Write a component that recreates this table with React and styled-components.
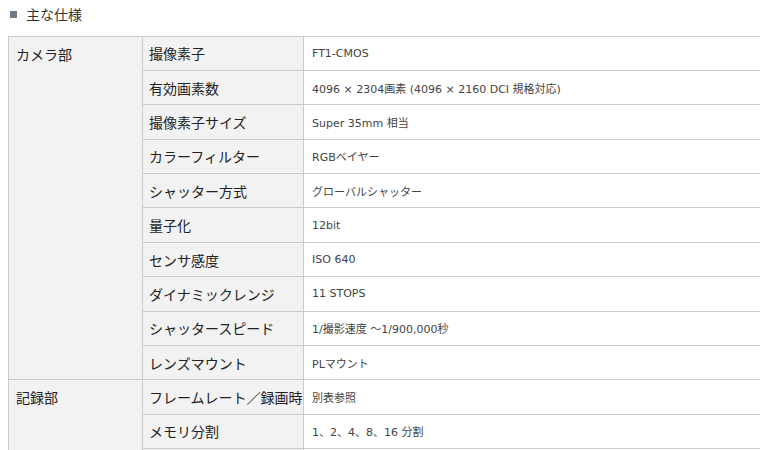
import React from 'react';
import styled, { createGlobalStyle } from 'styled-components';

const GlobalStyle = createGlobalStyle`
  html, body {
    margin: 0;
    padding: 0;
    background: #ffffff;
    overflow: hidden;
  }
  body {
    font-family: 'Noto Sans CJK JP', 'Noto Sans', sans-serif;
    color: #333333;
  }
`;

const Page = styled.div`
  width: 760px;
  height: 450px;
  overflow: hidden;
  padding: 0 0 0 8px;
  box-sizing: border-box;
`;

const Heading = styled.h2`
  display: flex;
  align-items: center;
  gap: 9px;
  margin: 0;
  padding: 0 0 0 2px;
  height: 28px;
  box-sizing: border-box;
  font-size: 14px;
  font-weight: normal;
  color: #333333;
  line-height: 20px;
`;

const Square = styled.span`
  display: block;
  width: 7px;
  height: 7px;
  background: #6f7b86;
`;

const SpecTable = styled.table`
  border-collapse: collapse;
  width: 820px;
  table-layout: fixed;
  margin-top: 7.5px;
`;

const Row = styled.tr`
  height: 34.4px;
`;

const Cell = styled.td`
  border: 1px solid #cccccc;
  padding: 0;
  box-sizing: border-box;
`;

const GroupCell = styled(Cell)`
  background: #f2f2f2;
  vertical-align: top;
  padding: 8px 0 0 7px;
  font-size: 14px;
  color: #222222;
  line-height: 18px;
`;

const LabelCell = styled(Cell)`
  background: #f2f2f2;
  padding-left: 6px;
  font-size: 14px;
  color: #222222;
  white-space: nowrap;
`;

const ValueCell = styled(Cell)`
  background: #ffffff;
  padding-left: 8px;
  font-family: 'DejaVu Sans', 'Noto Sans CJK JP', sans-serif;
  font-size: 11px;
  color: #444444;
  white-space: nowrap;
`;

const groups = [
  {
    name: 'カメラ部',
    rows: [
      ['撮像素子', 'FT1-CMOS'],
      ['有効画素数', '4096 × 2304画素 (4096 × 2160 DCI 規格対応)'],
      ['撮像素子サイズ', 'Super 35mm 相当'],
      ['カラーフィルター', 'RGBベイヤー'],
      ['シャッター方式', 'グローバルシャッター'],
      ['量子化', '12bit'],
      ['センサ感度', 'ISO 640'],
      ['ダイナミックレンジ', '11 STOPS'],
      ['シャッタースピード', '1/撮影速度 〜1/900,000秒'],
      ['レンズマウント', 'PLマウント'],
    ],
  },
  {
    name: '記録部',
    rows: [
      ['フレームレート／録画時', '別表参照'],
      ['メモリ分割', '1、2、4、8、16 分割'],
      ['', ''],
    ],
  },
];

const App = () => {
  return (
    <Page>
      <GlobalStyle />
      <Heading>
        <Square />
        主な仕様
      </Heading>
      <SpecTable>
        <colgroup>
          <col style={{ width: 134 }} />
          <col style={{ width: 161 }} />
          <col />
        </colgroup>
        <tbody>
          {groups.map((g) =>
            g.rows.map((r, i) => (
              <Row key={g.name + i}>
                {i === 0 && <GroupCell rowSpan={g.rows.length}>{g.name}</GroupCell>}
                <LabelCell>{r[0]}</LabelCell>
                <ValueCell>{r[1]}</ValueCell>
              </Row>
            ))
          )}
        </tbody>
      </SpecTable>
    </Page>
  );
};

export default App;
